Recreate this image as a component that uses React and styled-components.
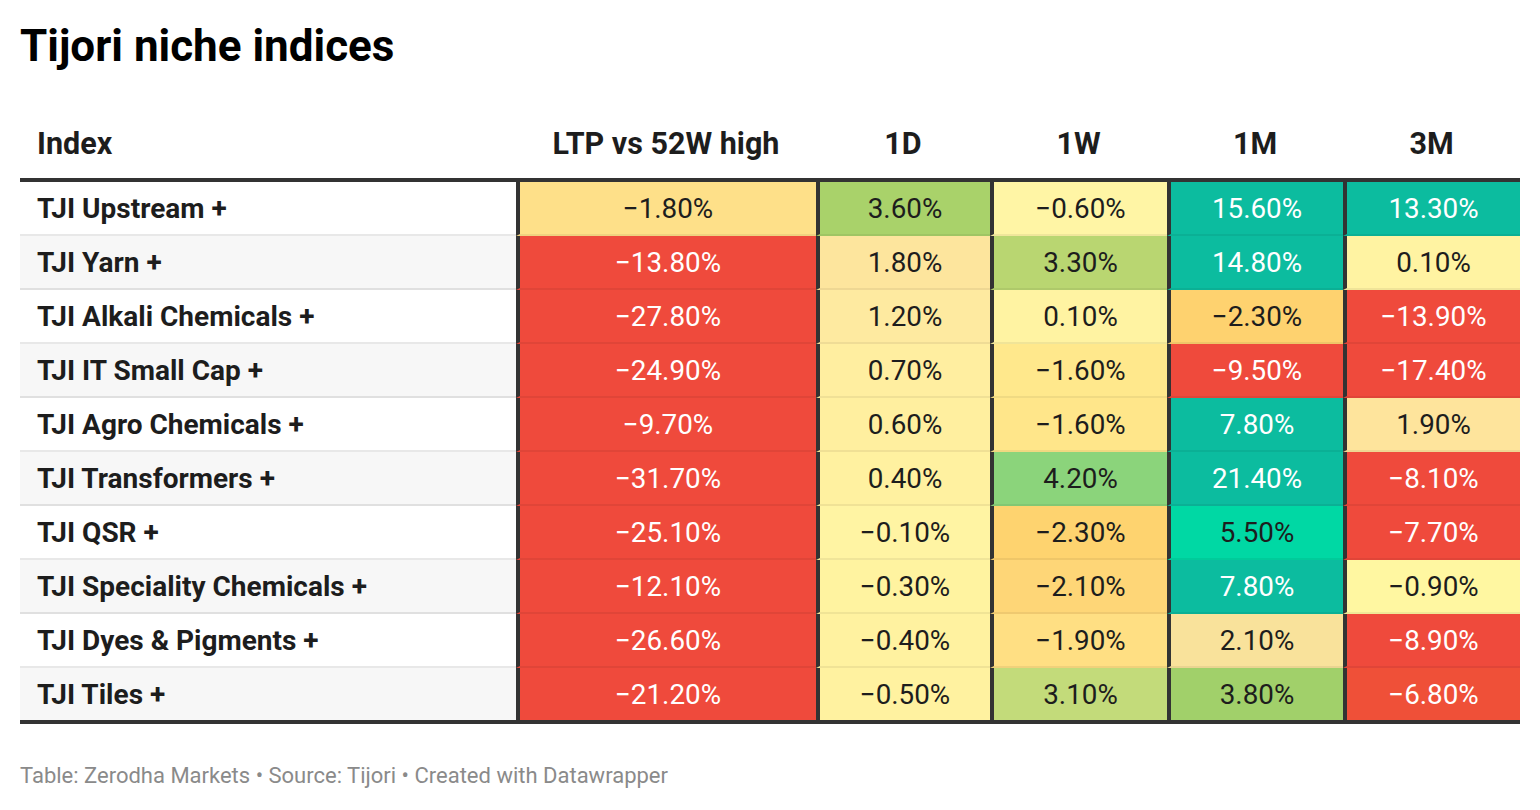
import React from "react";
import styled, { createGlobalStyle } from "styled-components";

const GlobalStyle = createGlobalStyle`
  html, body { margin: 0; padding: 0; background: #ffffff; }
  body { font-family: Roboto, "Liberation Sans", Arial, sans-serif; color: #1d1d1d; }
`;

const Page = styled.div`
  width: 1540px;
  height: 810px;
  box-sizing: border-box;
  padding: 20px 20px 0 20px;
  background: #fff;
`;

const Title = styled.h1`
  margin: 0;
  font-family: Roboto, "Liberation Sans", sans-serif;
  font-weight: 700;
  font-size: 44px;
  line-height: 52px;
  color: #000;
`;

const COLS = "496px 300px 174px 177px 176px 177px";

const Table = styled.div`
  display: flex;
  flex-direction: column;
  width: 1500px;
`;

const HeadRow = styled.div`
  display: grid;
  grid-template-columns: ${COLS};
  height: 106px;
  align-items: end;
  border-bottom: 4px solid #333;
`;

const HeadCell = styled.div`
  font-weight: 700;
  font-size: 30.5px;
  line-height: 30px;
  color: #1d1d1d;
  padding: 0 0 19px ${(p) => (p.$left ? "17px" : "0")};
  text-align: ${(p) => (p.$left ? "left" : "center")};
`;

const Body = styled.div`
  display: flex;
  flex-direction: column;
  border-bottom: 4px solid #333;
`;

const Row = styled.div`
  display: grid;
  grid-template-columns: ${COLS};
  height: ${(p) => (p.$last ? "52px" : "54px")};
`;

const LabelCell = styled.div`
  display: flex;
  align-items: center;
  padding-left: 17px;
  font-weight: 700;
  font-size: 28px;
  color: #1d1d1d;
  background: ${(p) => (p.$stripe ? "#f7f7f7" : "#ffffff")};
  border-bottom: ${(p) => (p.$last ? "0" : "2px solid rgba(0,0,0,0.09)")};
`;

const ValueCell = styled.div`
  display: flex;
  align-items: center;
  justify-content: center;
  font-weight: 400;
  font-size: 27.8px;
  color: ${(p) => (p.$light ? "#ffffff" : "#1d1d1d")};
  background: ${(p) => p.$bg};
  border-left: 4px solid #333;
  border-bottom: ${(p) => (p.$last ? "0" : "2px solid rgba(0,0,0,0.06)")};
`;

const Footer = styled.div`
  margin-top: 40px;
  font-size: 22px;
  line-height: 24px;
  color: #8a8a8a;
`;

const RED = "#ef4a3c";
const TEAL = "#0cbc9f";

const rows = [
  ["TJI Upstream +", [["−1.80%", "#fee089"], ["3.60%", "#a9d26a"], ["−0.60%", "#fff5a5"], ["15.60%", TEAL, 1], ["13.30%", TEAL, 1]]],
  ["TJI Yarn +", [["−13.80%", RED, 1], ["1.80%", "#fde59d"], ["3.30%", "#b9d671"], ["14.80%", TEAL, 1], ["0.10%", "#fff3a2"]]],
  ["TJI Alkali Chemicals +", [["−27.80%", RED, 1], ["1.20%", "#feeaa0"], ["0.10%", "#fff3a2"], ["−2.30%", "#fed26f"], ["−13.90%", RED, 1]]],
  ["TJI IT Small Cap +", [["−24.90%", RED, 1], ["0.70%", "#ffeea0"], ["−1.60%", "#ffe88c"], ["−9.50%", RED, 1], ["−17.40%", RED, 1]]],
  ["TJI Agro Chemicals +", [["−9.70%", RED, 1], ["0.60%", "#ffef9f"], ["−1.60%", "#ffe68a"], ["7.80%", TEAL, 1], ["1.90%", "#fee49c"]]],
  ["TJI Transformers +", [["−31.70%", RED, 1], ["0.40%", "#fff1a0"], ["4.20%", "#8bd47b"], ["21.40%", TEAL, 1], ["−8.10%", RED, 1]]],
  ["TJI QSR +", [["−25.10%", RED, 1], ["−0.10%", "#fff4a3"], ["−2.30%", "#fed36f"], ["5.50%", "#00d8a4"], ["−7.70%", RED, 1]]],
  ["TJI Speciality Chemicals +", [["−12.10%", RED, 1], ["−0.30%", "#fff3a0"], ["−2.10%", "#fed677"], ["7.80%", TEAL, 1], ["−0.90%", "#fff7a1"]]],
  ["TJI Dyes & Pigments +", [["−26.60%", RED, 1], ["−0.40%", "#fff2a0"], ["−1.90%", "#ffdf83"], ["2.10%", "#f9e29b"], ["−8.90%", RED, 1]]],
  ["TJI Tiles +", [["−21.20%", RED, 1], ["−0.50%", "#fff2a0"], ["3.10%", "#c3db7a"], ["3.80%", "#a1d06a"], ["−6.80%", "#ef5038", 1]]],
];

const headers = ["LTP vs 52W high", "1D", "1W", "1M", "3M"];

export default function App() {
  return (
    <>
      <GlobalStyle />
      <Page>
        <Title>Tijori niche indices</Title>
        <Table>
          <HeadRow>
            <HeadCell $left>Index</HeadCell>
            {headers.map((h) => (
              <HeadCell key={h}>{h}</HeadCell>
            ))}
          </HeadRow>
          <Body>
            {rows.map(([label, cells], i) => {
              const last = i === rows.length - 1;
              return (
                <Row key={label} $last={last}>
                  <LabelCell $stripe={i % 2 === 1} $last={last}>{label}</LabelCell>
                  {cells.map(([v, bg, light], j) => (
                    <ValueCell key={j} $bg={bg} $light={!!light} $last={last}>
                      {v}
                    </ValueCell>
                  ))}
                </Row>
              );
            })}
          </Body>
        </Table>
        <Footer>Table: Zerodha Markets • Source: Tijori • Created with Datawrapper</Footer>
      </Page>
    </>
  );
}
